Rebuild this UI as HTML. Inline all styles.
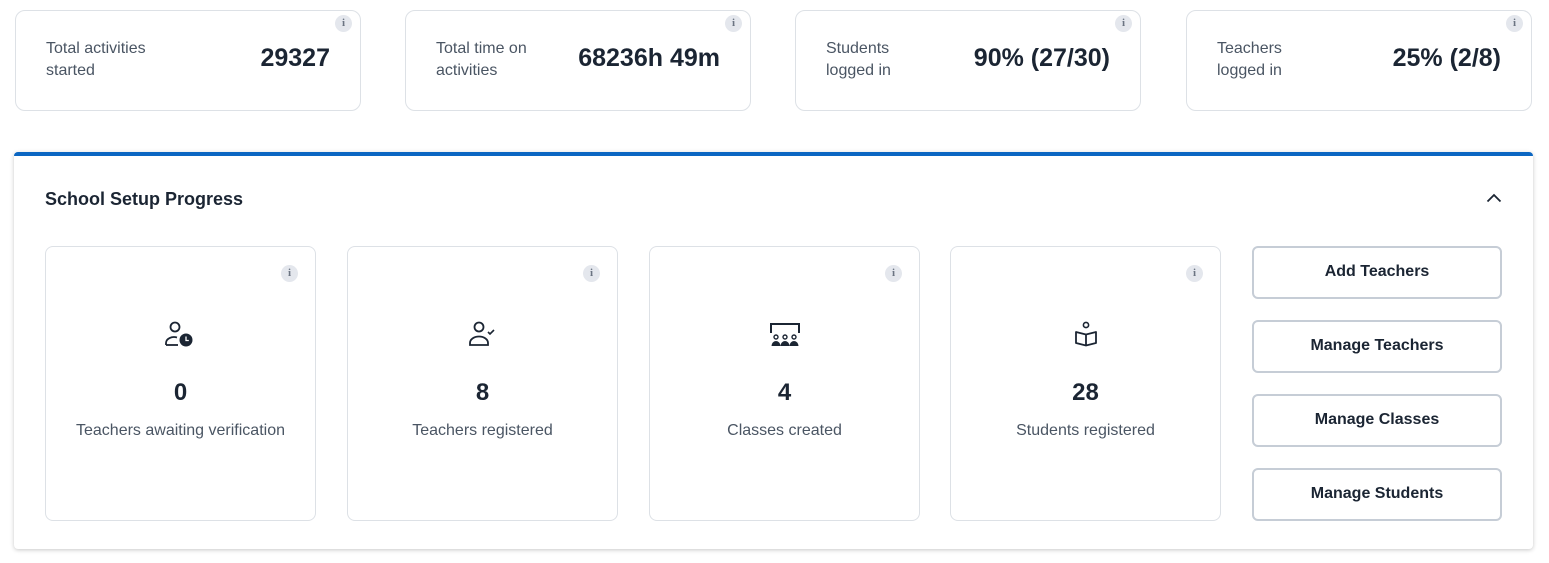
<!DOCTYPE html>
<html><head><meta charset="utf-8"><style>
*{box-sizing:border-box;margin:0;padding:0}
body{width:1549px;height:563px;background:#fff;font-family:"Liberation Sans",Arial,sans-serif;color:#1b2533;position:relative;overflow:hidden}
.tc{position:absolute;top:10px;height:101px;width:346px;border:1px solid #dde1e6;border-radius:10px;background:#fff}
.lab{position:absolute;left:30px;top:27px;font-size:16px;line-height:22px;color:#4a5563}
.val{position:absolute;right:30px;top:33px;font-size:25px;font-weight:bold;color:#1b2533}
.inf{position:absolute;width:17px;height:17px;border-radius:50%;background:#e4e7ed;color:#6b7482;font-size:11px;font-weight:bold;text-align:center;line-height:17px;font-family:"Liberation Serif",serif}
.tc .inf{right:8px;top:4px}
.panel{position:absolute;left:14px;top:152px;width:1519px;height:397px;border-top:4px solid #0b66c2;border-radius:4px;background:#fff;box-shadow:0 1px 4px rgba(0,0,0,.22)}
.title{position:absolute;left:31px;top:33px;font-size:18px;font-weight:bold}
.chev{position:absolute;left:1472px;top:37px}
.ic{position:absolute;top:90px;width:271px;height:275px;border:1px solid #dde1e6;border-radius:8px;text-align:center}
.ic .inf{right:17px;top:18px}
.ic svg{position:absolute;left:50%;top:74px;transform:translateX(-50%)}
.num{position:absolute;left:0;right:0;top:132px;font-size:24px;font-weight:bold}
.cap{position:absolute;left:0;right:0;top:175px;font-size:16px;color:#4a5563}
.btn{position:absolute;left:1238px;width:250px;height:53px;border:2px solid #c6cdd6;border-radius:6px;font-size:16px;font-weight:bold;text-align:center;line-height:47px;color:#1b2533}
</style></head><body>
<div class="tc" style="left:15px"><div class="inf">i</div><div class="lab">Total activities<br>started</div><div class="val">29327</div></div>
<div class="tc" style="left:405px"><div class="inf">i</div><div class="lab">Total time on<br>activities</div><div class="val">68236h 49m</div></div>
<div class="tc" style="left:795px"><div class="inf">i</div><div class="lab">Students<br>logged in</div><div class="val">90% (27/30)</div></div>
<div class="tc" style="left:1186px"><div class="inf">i</div><div class="lab">Teachers<br>logged in</div><div class="val">25% (2/8)</div></div>

<div class="panel">
<div class="title">School Setup Progress</div>
<svg class="chev" width="16" height="10" viewBox="0 0 16 10"><path d="M1.5 8.5L8 2l6.5 6.5" fill="none" stroke="#1b2533" stroke-width="1.8"/></svg>

<div class="ic" style="left:31px"><div class="inf">i</div>
<svg width="32" height="26" viewBox="0 0 32 26"><circle cx="10" cy="6" r="4.5" fill="none" stroke="#1b2533" stroke-width="1.8"/><path d="M1 24v-2a8 6 0 0 1 11-5.5" fill="none" stroke="#1b2533" stroke-width="1.8"/><path d="M1 24h12" stroke="#1b2533" stroke-width="1.8"/><circle cx="21" cy="19" r="6.5" fill="#1b2533"/><path d="M21 15.5v4h2.8" fill="none" stroke="#fff" stroke-width="1.3"/></svg>
<div class="num">0</div><div class="cap">Teachers awaiting verification</div></div>

<div class="ic" style="left:333px"><div class="inf">i</div>
<svg width="32" height="26" viewBox="0 0 32 26"><circle cx="12" cy="6" r="4.5" fill="none" stroke="#1b2533" stroke-width="1.8"/><path d="M3 24v-2a9 6.5 0 0 1 18 0v2z" fill="none" stroke="#1b2533" stroke-width="1.8"/><path d="M21 11l2 2 4-4" fill="none" stroke="#1b2533" stroke-width="1.6"/></svg>
<div class="num">8</div><div class="cap">Teachers registered</div></div>

<div class="ic" style="left:635px"><div class="inf">i</div>
<svg width="32" height="26" viewBox="0 0 32 26"><path d="M2 12V3h28v9" fill="none" stroke="#1b2533" stroke-width="2"/><g fill="none" stroke="#1b2533" stroke-width="1.4"><circle cx="7" cy="16" r="2"/><circle cx="16" cy="16" r="2"/><circle cx="25" cy="16" r="2"/></g><g fill="#1b2533"><path d="M2.5 25a4.5 5 0 0 1 9 0z"/><path d="M11.5 25a4.5 5 0 0 1 9 0z"/><path d="M20.5 25a4.5 5 0 0 1 9 0z"/></g></svg>
<div class="num">4</div><div class="cap">Classes created</div></div>

<div class="ic" style="left:936px"><div class="inf">i</div>
<svg width="32" height="26" viewBox="0 0 32 26"><circle cx="16" cy="4" r="2.6" fill="none" stroke="#1b2533" stroke-width="1.6"/><path d="M6 11l10 2.5 10-2.5v11l-10 2.5-10-2.5z M16 13.5v11" fill="none" stroke="#1b2533" stroke-width="1.8" stroke-linejoin="round"/></svg>
<div class="num">28</div><div class="cap">Students registered</div></div>

<div class="btn" style="top:90px">Add Teachers</div>
<div class="btn" style="top:164px">Manage Teachers</div>
<div class="btn" style="top:238px">Manage Classes</div>
<div class="btn" style="top:312px">Manage Students</div>
</div>
</body></html>
